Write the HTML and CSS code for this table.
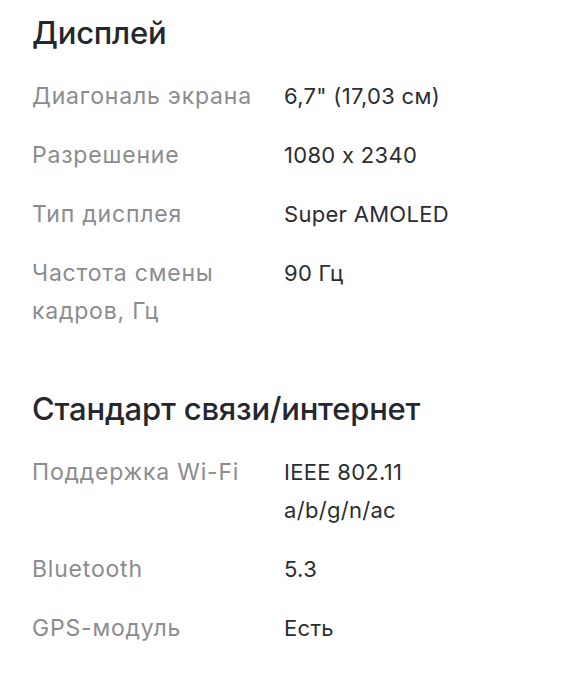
FILE: index.html
```html
<!DOCTYPE html>
<html lang="ru">
<head>
<meta charset="utf-8">
<title>Характеристики</title>
<link rel="stylesheet" href="styles.css">
</head>
<body>
<main class="specs">
  <section class="section">
    <h2 class="section-title">Дисплей</h2>
    <dl class="rows">
      <div class="row"><dt class="label">Диагональ экрана</dt><dd class="value">6,7" (17,03 см)</dd></div>
      <div class="row"><dt class="label">Разрешение</dt><dd class="value">1080 x 2340</dd></div>
      <div class="row"><dt class="label">Тип дисплея</dt><dd class="value">Super AMOLED</dd></div>
      <div class="row"><dt class="label">Частота смены кадров, Гц</dt><dd class="value">90 Гц</dd></div>
    </dl>
  </section>
  <section class="section">
    <h2 class="section-title">Стандарт связи/интернет</h2>
    <dl class="rows">
      <div class="row"><dt class="label">Поддержка Wi-Fi</dt><dd class="value">IEEE 802.11 a/b/g/n/ac</dd></div>
      <div class="row"><dt class="label">Bluetooth</dt><dd class="value">5.3</dd></div>
      <div class="row"><dt class="label">GPS-модуль</dt><dd class="value">Есть</dd></div>
    </dl>
  </section>
</main>
</body>
</html>
```
FILE: styles.css
```css
* { box-sizing: border-box; }
html, body { margin: 0; padding: 0; background: #ffffff; }
body {
  font-family: "Inter", "Noto Sans", sans-serif;
  color: #2b2d31;
}
.specs {
  display: flex;
  flex-direction: column;
  gap: 59px;
  padding: 13px 24px 0 32px;
}
.section {
  display: flex;
  flex-direction: column;
  gap: 25px;
}
.section-title {
  margin: 0;
  font-size: 31px;
  line-height: 40px;
  font-weight: 500;
  letter-spacing: -0.2px;
  color: #24272d;
}
.rows {
  margin: 0;
  display: flex;
  flex-direction: column;
  gap: 21.5px;
}
.row {
  display: grid;
  grid-template-columns: 252px 1fr;
}
.label {
  margin: 0;
  font-size: 23px;
  line-height: 37.5px;
  letter-spacing: 0.8px;
  color: #8b8c90;
  padding-right: 24px;
}
.value {
  margin: 0;
  font-size: 22px;
  line-height: 37.5px;
  letter-spacing: 0.3px;
  color: #2b2d31;
  padding-right: 40px;
}
```
